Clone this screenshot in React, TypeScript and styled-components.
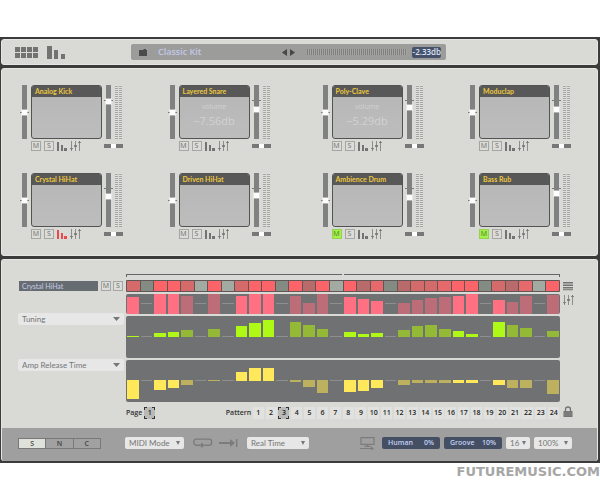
import React, { useState } from "react";
import styled, { createGlobalStyle, css } from "styled-components";

const ui = '"Open Sans", "Noto Sans", sans-serif';
const label = 'Lato, "Open Sans", sans-serif';

const GlobalStyle = createGlobalStyle`
  *, *::before, *::after { box-sizing: border-box; }
  body { margin: 0; background: #fff; font-family: ${ui}; font-size: 8px; color: #333; }
  button, select, input { font-family: inherit; margin: 0; padding: 0; border: 0; }
  button, select { cursor: pointer; }
  svg { display: block; }
`;

/* ---------- frame ---------- */

const Page = styled.main`
  padding-top: 37px;
`;

const Frame = styled.div`
  display: flex;
  flex-direction: column;
  gap: 3px;
  padding: 2px 2px 2px 1px;
  background: #3b3b3b;
`;

const Panel = styled.section`
  border-radius: 3px;
  background: #d9dad6;
  border: 1px solid #e6e6e3;
  overflow: hidden;
`;

/* ---------- header ---------- */

const Header = styled(Panel)`
  display: grid;
  grid-template-columns: 129px 53% 1fr;
  align-items: center;
  height: 26px;
`;

const ViewButtons = styled.div`
  display: flex;
  gap: 8px;
  padding-left: 13px;
`;

const IconButton = styled.button`
  display: flex;
  flex: none;
  background: none;
  color: ${(p: { $color?: string }) => p.$color || "#737471"};
`;

const Display = styled.div`
  display: flex;
  align-items: center;
  height: 16px;
  padding: 0 5px 0 8px;
  border-radius: 2px;
  background: #9c9d9b;
  color: #4a4b4a;
`;

const KitName = styled.span`
  flex: 1;
  padding-left: 11px;
  font-size: 9px;
  font-weight: 600;
  line-height: 12px;
  color: #c3c8e8;
`;

const Arrows = styled.div`
  display: flex;
  gap: 1px;
  margin-right: 12px;
`;

const MasterMeter = styled.div`
  width: 100px;
  height: 6px;
  margin-right: 5px;
  background: repeating-linear-gradient(90deg, #7f807f 0 1px, #a5a6a4 1px 2px);
`;

const DbBadge = styled.output`
  width: 29px;
  height: 11px;
  border-radius: 2px;
  background: #46516a;
  color: #dbe3f6;
  font-size: 8px;
  font-weight: 600;
  line-height: 10px;
  text-align: center;
`;

/* ---------- pads ---------- */

const PadPanel = styled(Panel)`
  display: flex;
  flex-direction: column;
  gap: 22px;
  padding: 16px 26px 16px 18px;
`;

const PadRow = styled.div`
  display: flex;
  justify-content: space-between;
`;

const PadPair = styled.div`
  display: flex;
  justify-content: space-between;
  width: calc(50% - 25px);
`;

const Pad = styled.article`
  display: grid;
  grid-template-columns: 9px 71px 9px 8px;
  column-gap: 2px;
  row-gap: 2px;
`;

const SliderSlot = styled.div<{ $tick: number }>`
  display: flex;
  justify-content: center;
  height: 54px;
  background: linear-gradient(#777, #777) 0 ${(p) => p.$tick}px / 100% 1px no-repeat;
`;

const VSlider = styled.input.attrs({ type: "range" })`
  appearance: none;
  writing-mode: vertical-lr;
  direction: rtl;
  width: 5px;
  height: 54px;
  background: #7f8281;
  &::-webkit-slider-thumb {
    appearance: none;
    width: 5px;
    height: 5px;
    background: #fff;
    box-shadow: 0 0 0 1px rgba(255, 255, 255, 0.4);
  }
`;

const Screen = styled.div`
  display: flex;
  flex-direction: column;
  height: 54px;
  border: 1px solid #525353;
  border-radius: 3px;
  background: linear-gradient(#b6b6b6, #bdbdbd);
  overflow: hidden;
`;

const PadName = styled.h2`
  margin: 0;
  padding: 0 3px;
  background: #585858;
  color: #ecc73c;
  font-family: ${label};
  font-size: 7px;
  font-weight: 700;
  line-height: 11px;
  white-space: nowrap;
`;

const Readout = styled.div`
  padding-top: 4px;
  text-align: center;
  color: #d2d2d2;
  font-size: 7px;
  line-height: 12px;
`;

const ReadoutValue = styled.div`
  font-size: 11px;
  line-height: 15px;
`;

const Meter = styled.div`
  height: 54px;
  width: 7px;
  background:
    linear-gradient(90deg, transparent 3px, #d9dad6 3px 4px, transparent 4px),
    repeating-linear-gradient(#dfe0dc 0 1px, #a5a6a3 1px 2px);
`;

const PadTools = styled.div`
  grid-column: 2;
  display: flex;
  align-items: center;
  gap: 3px;
  height: 10px;
`;

const SquareToggle = styled.button`
  flex: none;
  width: 10px;
  height: 10px;
  border: 1px solid #a5a6a3;
  background: #dcddd9;
  color: #6b6c6a;
  font-size: 7px;
  line-height: 8px;
  text-align: center;
  &[aria-pressed="true"] {
    background: #a4f04e;
    border-color: #93d34c;
    color: #4d7a22;
  }
`;

const PanSlot = styled.div`
  grid-column: 3 / 5;
  display: flex;
  align-items: center;
`;

const HSlider = styled.input.attrs({ type: "range" })`
  appearance: none;
  width: 19px;
  min-width: 19px;
  height: 4px;
  background: #767776;
  &::-webkit-slider-thumb {
    appearance: none;
    width: 5px;
    height: 4px;
    background: #fff;
  }
`;

/* ---------- sequencer ---------- */

const SeqPanel = styled(Panel)`
  border-bottom: 0;
`;

const SeqBody = styled.div`
  display: grid;
  grid-template-columns: 106px 1fr 12px;
  column-gap: 2px;
  padding: 14px 23px 9px 16px;
`;

const Lanes = styled.div`
  display: flex;
  flex-direction: column;
  gap: 2px;
`;

const SideControls = styled.div`
  display: flex;
  flex-direction: column;
  padding-top: 7px;
`;

const TrackLine = styled.div`
  display: flex;
  gap: 2px;
  padding: 0 1px 0 1px;
  margin-bottom: 22px;
`;

const TrackName = styled.div`
  flex: 1;
  margin-right: 1px;
  padding-left: 3px;
  background: #676c72;
  color: #c7cde6;
  font-family: ${label};
  font-size: 7px;
  line-height: 10px;
`;

const SelectBox = styled.div<{ $width?: string }>`
  display: grid;
  align-items: center;
  flex: none;
  width: ${(p) => p.$width || "100%"};
  height: 12px;
  border-radius: 2px;
  background: #e6e7e6;
  color: #777;
  & > * { grid-area: 1 / 1; }
  & > svg { justify-self: end; margin-right: 4px; pointer-events: none; }
`;

const Select = styled.select`
  appearance: none;
  width: 100%;
  height: 12px;
  padding: 0 4px;
  background: transparent;
  color: #757676;
  font-family: ${label};
  font-size: 8px;
  line-height: 12px;
`;

const LaneGap = styled.div`
  height: 34px;
`;

const LoopBar = styled.div`
  display: grid;
  grid-template-columns: 1fr 1fr;
  gap: 2px;
  height: 3px;
  margin-bottom: 1px;
`;

const LoopHalf = styled.div<{ $end?: boolean }>`
  border-top: 1px solid #666;
  ${(p) => (p.$end ? css`border-right: 1px solid #666;` : css`border-left: 1px solid #666;`)}
`;

const StepRow = styled.div`
  display: grid;
  grid-template-columns: repeat(32, 1fr);
  column-gap: 1px;
  height: 12px;
  padding: 1px;
  border-radius: 1px;
  background: #5f5655;
`;

const Step = styled.button<{ $color: string }>`
  min-width: 0;
  background: ${(p) => p.$color};
`;

const Lane = styled.div<{ $height: number; $mid: number }>`
  display: grid;
  grid-template-columns: repeat(32, 1fr);
  column-gap: 2px;
  height: ${(p) => p.$height}px;
  padding: 0 1px;
  border-radius: 2px;
  background: #707173;
  & > * { --mid: ${(p) => p.$mid}px; }
`;

const Cell = styled.div`
  min-width: 0;
  background: linear-gradient(#8d8e8f, #8d8e8f) 0 var(--mid) / 100% 1px no-repeat;
`;

const Bar = styled.div<{ $color: string }>`
  background: ${(p) => p.$color};
`;

const RightTools = styled.div`
  display: flex;
  flex-direction: column;
  gap: 4px;
  padding: 8px 0 0 1px;
  color: #666;
`;

const PatternLine = styled.div`
  grid-column: 2;
  display: flex;
  align-items: center;
  padding-top: 5px;
  color: #303030;
  font-size: 7px;
  font-weight: 600;
  line-height: 12px;
`;

const PageGroup = styled.div`
  display: flex;
  gap: 2px;
  width: 23%;
`;

const PatternGroup = styled.div`
  display: flex;
  flex: 1;
`;

const PatternLabel = styled.span`
  width: 26px;
`;

const NumberSlot = styled.div`
  flex: 1;
  min-width: 0;
  display: flex;
  justify-content: center;
`;

const NumberButton = styled.button`
  width: 11px;
  height: 12px;
  background: #e1e2df;
  color: #222;
  font-size: 7px;
  font-weight: 600;
  line-height: 12px;
  text-align: center;
  &[aria-pressed="true"] {
    background:
      linear-gradient(90deg, #333 3px, transparent 3px 8px, #333 8px) 0 0 / 100% 1px no-repeat,
      linear-gradient(90deg, #333 3px, transparent 3px 8px, #333 8px) 0 100% / 100% 1px no-repeat,
      linear-gradient(#333 3px, transparent 3px 9px, #333 9px) 0 0 / 1px 100% no-repeat,
      linear-gradient(#333 3px, transparent 3px 9px, #333 9px) 100% 0 / 1px 100% no-repeat,
      #b9bab8;
  }
`;

const LockSlot = styled.div`
  grid-column: 3;
  padding: 4px 0 0 1px;
`;

/* ---------- transport ---------- */

const Transport = styled.footer`
  display: flex;
  align-items: center;
  height: 33px;
  padding: 0 25px 3px 16px;
  background: #9e9f9e;
`;

const Segments = styled.div`
  display: flex;
  width: 83px;
  height: 11px;
  margin-right: 24px;
  border: 1px solid #787978;
`;

const Segment = styled.button`
  flex: 1;
  background: #a0a1a0;
  color: #444;
  font-size: 7px;
  font-weight: 600;
  line-height: 9px;
  & + & { border-left: 1px solid #787978; }
  &[aria-pressed="true"] { background: #dfe1db; }
`;

const TransportIcons = styled.div`
  display: flex;
  align-items: center;
  gap: 6px;
  padding: 0 9px;
  color: #7b7c7b;
`;

const RightCluster = styled.div`
  display: flex;
  align-items: center;
  gap: 4px;
  margin-left: auto;
  color: #7b7c7b;
`;

const Knob = styled.button`
  display: flex;
  justify-content: space-between;
  width: 58px;
  height: 12px;
  padding: 0 6px;
  border-radius: 2px;
  background: #454f64;
  color: #c3d0f4;
  font-size: 7px;
  font-weight: 600;
  line-height: 12px;
`;

const IconSlot = styled.div`
  margin-right: 3px;
`;

const Watermark = styled.div`
  padding-top: 1px;
  text-align: right;
  font-family: "DejaVu Sans", sans-serif;
  font-size: 13px;
  font-weight: 700;
  line-height: 15px;
  color: #a6a6a6;
`;

/* ---------- icons ---------- */

const GridIcon = () => (
  <svg width="24" height="12" viewBox="0 0 24 12" fill="currentColor">
    {[0, 6, 12, 18].map((x) => [1, 7].map((y) => <rect key={`${x}-${y}`} x={x} y={y} width="5" height="5" />))}
  </svg>
);

const BigBarsIcon = () => (
  <svg width="18" height="13" viewBox="0 0 18 13" fill="currentColor">
    <rect x="0" y="0" width="5" height="13" />
    <rect x="7" y="4" width="4" height="9" />
    <rect x="14" y="8" width="4" height="5" />
  </svg>
);

const BarsIcon = () => (
  <svg width="10" height="9" viewBox="0 0 10 9" fill="currentColor">
    <rect x="0" y="0" width="2" height="9" />
    <rect x="4" y="3" width="2" height="6" />
    <rect x="7" y="6" width="3" height="3" />
  </svg>
);

const FadersIcon = () => (
  <svg width="11" height="10" viewBox="0 0 11 10" fill="currentColor">
    <path d="M1 0h1v10h-1zM5 0h1v10h-1zM9 0h1v10h-1z" opacity=".75" />
    <path d="M0 7h3v1h-1v1h-1v-1h-1zM4 4h3v2h-3zM9 0h1v1h1v1h-3v-1h1z" opacity=".8" />
  </svg>
);

const FolderIcon = () => (
  <svg width="8" height="7" viewBox="0 0 8 7" fill="currentColor">
    <path d="M0 1h4l1-1h2v1h1v6h-8z" />
  </svg>
);

const Triangle = ({ right }: { right?: boolean }) => (
  <svg width="6" height="7" viewBox="0 0 6 7" fill="currentColor">
    <path d={right ? "M1 0l5 3.5-5 3.5z" : "M5 0l-5 3.5 5 3.5z"} />
  </svg>
);

const Caret = ({ wide }: { wide?: boolean }) =>
  wide ? (
    <svg width="7" height="4" viewBox="0 0 7 4" fill="currentColor"><path d="M0 0h7l-3.5 4z" /></svg>
  ) : (
    <svg width="4" height="4" viewBox="0 0 4 4" fill="currentColor"><path d="M0 0h4l-2 4z" /></svg>
  );

const ListIcon = () => (
  <svg width="10" height="9" viewBox="0 0 10 9" fill="currentColor">
    <path d="M0 0h10v1.5h-10zM0 2.5h10v1.5h-10zM0 5h10v1.5h-10zM0 7.2h10v1h-10z" />
  </svg>
);

const LockIcon = () => (
  <svg width="10" height="12" viewBox="0 0 10 12" fill="none">
    <path d="M2.5 6v-2.5a2.5 2.5 0 0 1 5 0v2.5" stroke="#747574" strokeWidth="1.3" />
    <path d="M0.5 5h9v6h-9z" fill="#747574" />
    <path d="M0.5 7h9M0.5 9h9" stroke="#8e8f8d" strokeWidth=".6" />
  </svg>
);

const LoopIcon = () => (
  <svg width="20" height="10" viewBox="0 0 20 10" fill="none" stroke="currentColor" strokeWidth="1.4">
    <path d="M8 7.3h-4.5a2.6 2.6 0 0 1-2.6-2.6v-1a2.6 2.6 0 0 1 2.6-2.6h12.5a2.6 2.6 0 0 1 2.6 2.6v1a2.6 2.6 0 0 1-2.6 2.6h-4" />
    <path d="M8 4.6l4 2.7-4 2.7z" fill="currentColor" stroke="none" />
  </svg>
);

const GotoIcon = () => (
  <svg width="19" height="8" viewBox="0 0 19 8" fill="currentColor">
    <path d="M0 3h11v-3l5 4-5 4v-3h-11zM17 0h1.4v8h-1.4z" />
  </svg>
);

const MonitorIcon = () => (
  <svg width="15" height="13" viewBox="0 0 15 13" fill="none" stroke="currentColor">
    <path d="M1 .7h13v6.6h-13zM7.500 7.300v2M4.500 9.300h6" strokeWidth="1.2" />
    <path d="M0 11.500h11" />
    <path d="M11 9.500l3 2-3 2z" fill="currentColor" stroke="none" />
  </svg>
);

/* ---------- data ---------- */

type PadData = {
  name: string;
  level: number;
  volume?: string;
  muted?: boolean;
  active?: boolean;
};

const PADS: PadData[][][] = [
  [
    [{ name: "Analog Kick", level: 35 }, { name: "Layered Snare", level: 27, volume: "−7.56db" }],
    [{ name: "Poly-Clave", level: 29, volume: "−5.29db" }, { name: "Moduclap", level: 27 }],
  ],
  [
    [{ name: "Crystal HiHat", level: 28, active: true }, { name: "Driven HiHat", level: 29 }],
    [{ name: "Ambience Drum", level: 27, muted: true }, { name: "Bass Rub", level: 31, muted: true }],
  ],
];

const STEP_COLORS: Record<string, string> = {
  R: "#fb6468",
  r: "#e6696b",
  m: "#d56a6b",
  d: "#b96b6b",
  g: "#838b83",
  l: "#a2aaa2",
};
const STEPS = "mgRRmlRlmRRgRdRlRdrgdmmrRRgmdrlR".split("");

/* "b" bright, "d" dimmed, "x" where the step is off. */
const SHADE = "bxbbdxdxbbbxdddxbbbxddddbbxbddxd".split("");
const VELOCITY = [17, 0, 20, 20, 18, 0, 20, 0, 18, 20, 20, 0, 18, 11, 20, 0, 17, 15, 13, 0, 11, 14, 16, 17, 18, 20, 0, 14, 12, 18, 0, 19];
const TUNING = [1, 0, 4, 5, 7, 0, 8, 0, 11, 14, 17, 0, 15, 12, 8, 0, 5, 3, 4, 0, 7, 11, 12, 8, 6, 3, 0, 15, 12, 9, 0, 6];
const RELEASE = [-19, 0, -10, -8, -5, 0, -1, 0, 9, 13, 13, 0, -2, -7, -13, 0, -12, -11, -8, 0, -5, -3, -3, -3, -3, -3, 0, -5, -8, -8, 0, -14];

/* ---------- parts ---------- */

function Toggle({ label, title, on = false }: { label: string; title: string; on?: boolean }) {
  const [pressed, setPressed] = useState(on);
  return (
    <SquareToggle aria-label={title} aria-pressed={pressed} onClick={() => setPressed(!pressed)}>
      {label}
    </SquareToggle>
  );
}

function DrumPad({ pad }: { pad: PadData }) {
  return (
    <Pad>
      <SliderSlot $tick={27}>
        <VSlider aria-label={`${pad.name} pitch`} min={0} max={49} defaultValue={24} />
      </SliderSlot>
      <Screen>
        <PadName>{pad.name}</PadName>
        {pad.volume && (
          <Readout>
            volume
            <ReadoutValue>{pad.volume}</ReadoutValue>
          </Readout>
        )}
      </Screen>
      <SliderSlot $tick={15}>
        <VSlider aria-label={`${pad.name} volume`} min={0} max={49} defaultValue={pad.level} />
      </SliderSlot>
      <Meter />
      <PadTools>
        <Toggle label="M" title={`Mute ${pad.name}`} on={pad.muted} />
        <Toggle label="S" title={`Solo ${pad.name}`} />
        <IconButton aria-label="Edit steps" $color={pad.active ? "#f0474a" : undefined}>
          <BarsIcon />
        </IconButton>
        <IconButton aria-label="Mixer"><FadersIcon /></IconButton>
      </PadTools>
      <PanSlot>
        <HSlider aria-label={`${pad.name} pan`} defaultValue={50} />
      </PanSlot>
    </Pad>
  );
}

type GraphProps = { values: number[]; height: number; base: number; mid: number; bright: string; dim: string };

function Graph({ values, height, base, mid, bright, dim }: GraphProps) {
  return (
    <Lane $height={height} $mid={mid}>
      {values.map((v, i) => (
        <Cell key={i} style={{ paddingTop: v > 0 ? base - v : base - 1 }}>
          {v !== 0 && <Bar $color={SHADE[i] === "b" ? bright : dim} style={{ height: Math.abs(v) }} />}
        </Cell>
      ))}
    </Lane>
  );
}

type DropProps = { label: string; value: string; width?: string; wide?: boolean };

function Drop({ label, value, width, wide }: DropProps) {
  return (
    <SelectBox $width={width}>
      <Select aria-label={label} defaultValue={value}>
        <option>{value}</option>
      </Select>
      <Caret wide={wide} />
    </SelectBox>
  );
}

export default function App() {
  const [pattern, setPattern] = useState(3);
  const [mode, setMode] = useState("S");
  return (
    <Page>
      <GlobalStyle />
      <Frame>
        <Header as="header">
          <ViewButtons>
            <IconButton aria-label="Pads"><GridIcon /></IconButton>
            <IconButton aria-label="Sequencer"><BigBarsIcon /></IconButton>
          </ViewButtons>
          <Display>
            <FolderIcon />
            <KitName>Classic Kit</KitName>
            <Arrows>
              <IconButton aria-label="Previous kit" $color="#464746"><Triangle /></IconButton>
              <IconButton aria-label="Next kit" $color="#464746"><Triangle right /></IconButton>
            </Arrows>
            <MasterMeter />
            <DbBadge>-2.33db</DbBadge>
          </Display>
        </Header>

        <PadPanel>
          {PADS.map((row, r) => (
            <PadRow key={r}>
              {row.map((pair, p) => (
                <PadPair key={p}>
                  {pair.map((pad) => <DrumPad key={pad.name} pad={pad} />)}
                </PadPair>
              ))}
            </PadRow>
          ))}
        </PadPanel>

        <SeqPanel>
          <SeqBody>
            <SideControls>
              <TrackLine>
                <TrackName>Crystal HiHat</TrackName>
                <Toggle label="M" title="Mute track" />
                <Toggle label="S" title="Solo track" />
              </TrackLine>
              <Drop label="First lane" value="Tuning" wide />
              <LaneGap />
              <Drop label="Second lane" value="Amp Release Time" wide />
            </SideControls>

            <Lanes>
              <LoopBar>
                <LoopHalf />
                <LoopHalf $end />
              </LoopBar>
              <StepRow>
                {STEPS.map((s, i) => <Step key={i} $color={STEP_COLORS[s]} aria-label={`Step ${i + 1}`} />)}
              </StepRow>
              <Graph values={VELOCITY} height={20} base={20} mid={9} bright="#ff7182" dim="#bd6d77" />
              <Graph values={TUNING} height={42} base={21} mid={20} bright="#aefa16" dim="#93b936" />
              <Graph values={RELEASE} height={42} base={21} mid={20} bright="#ffe95a" dim="#bdb160" />
            </Lanes>

            <RightTools>
              <IconButton aria-label="Lane list"><ListIcon /></IconButton>
              <IconButton aria-label="Lane mixer"><FadersIcon /></IconButton>
            </RightTools>

            <PatternLine>
              <PageGroup>
                Page
                <NumberButton aria-label="Page 1" aria-pressed>1</NumberButton>
              </PageGroup>
              <PatternGroup>
                <PatternLabel>Pattern</PatternLabel>
                {Array.from({ length: 24 }, (_, i) => i + 1).map((n) => (
                  <NumberSlot key={n}>
                    <NumberButton aria-pressed={n === pattern} onClick={() => setPattern(n)}>{n}</NumberButton>
                  </NumberSlot>
                ))}
              </PatternGroup>
            </PatternLine>
            <LockSlot>
              <IconButton aria-label="Lock pattern"><LockIcon /></IconButton>
            </LockSlot>
          </SeqBody>

          <Transport>
            <Segments>
              {["S", "N", "C"].map((m) => (
                <Segment key={m} aria-pressed={m === mode} onClick={() => setMode(m)}>{m}</Segment>
              ))}
            </Segments>
            <Drop label="Trigger mode" value="MIDI Mode" width="59px" />
            <TransportIcons>
              <IconButton aria-label="Loop" $color="#7b7c7b"><LoopIcon /></IconButton>
              <IconButton aria-label="Play once" $color="#7b7c7b"><GotoIcon /></IconButton>
            </TransportIcons>
            <Drop label="Change time" value="Real Time" width="62px" />
            <RightCluster>
              <IconSlot><MonitorIcon /></IconSlot>
              <Knob><span>Human</span><span>0%</span></Knob>
              <Knob><span>Groove</span><span>10%</span></Knob>
              <Drop label="Grid" value="16" width="24px" />
              <Drop label="Zoom" value="100%" width="38px" />
            </RightCluster>
          </Transport>
        </SeqPanel>
      </Frame>
      <Watermark>FUTUREMUSIC.COM</Watermark>
    </Page>
  );
}
